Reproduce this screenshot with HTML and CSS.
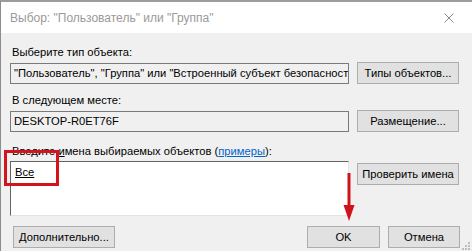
FILE: index.html
```html
<!DOCTYPE html>
<html lang="ru">
<head>
    <meta charset="UTF-8">
    <title>Выбор: "Пользователь" или "Группа"</title>
    <link rel="stylesheet" href="styles.css">
</head>
<body>
    <div class="window">
        <!-- заголовок -->
        <div class="titlebar">
            <span class="title">Выбор: "Пользователь" или "Группа"</span>
            <svg class="close" width="10" height="10" viewBox="0 0 10 10">
                <path d="M0.5 0.5 L9.5 9.5 M9.5 0.5 L0.5 9.5" stroke="#8a8a8a" stroke-width="1" fill="none"/>
            </svg>
        </div>
        <div class="content">
            <div class="label">Выберите тип объекта:</div>
            <div class="row">
                <div class="field">"Пользователь", "Группа" или "Встроенный субъект безопасности"</div>
                <div class="btn side">Типы объектов...</div>
            </div>
            <div class="label l2">В следующем месте:</div>
            <div class="row">
                <div class="field">DESKTOP-R0ET76F</div>
                <div class="btn side">Размещение...</div>
            </div>
            <div class="label l3">Введите <u>и</u>мена выбираемых объектов (<a href="#">примеры</a>):</div>
            <div class="row top">
                <div class="names"><u>Все</u></div>
                <div class="btn side check">Проверить имена</div>
            </div>
            <div class="bottom">
                <div class="btn more">Дополнительно...</div>
                <div class="btn ok">OK</div>
                <div class="btn cancel">Отмена</div>
            </div>
        </div>
        <!-- выделение красным -->
        <div class="mark"></div>
        <svg class="arrow" width="14" height="50" viewBox="0 0 14 50">
            <path d="M7 0 L7 33" stroke="#d0121b" stroke-width="3" fill="none"/>
            <path d="M1.5 32 L12.5 32 L7 48 Z" fill="#d0121b"/>
        </svg>
        <svg class="grip" width="10" height="10" viewBox="0 0 10 10">
            <rect x="7" y="1" width="2" height="2" fill="#bdbdbd"/>
            <rect x="4" y="4" width="2" height="2" fill="#bdbdbd"/>
            <rect x="7" y="4" width="2" height="2" fill="#bdbdbd"/>
            <rect x="1" y="7" width="2" height="2" fill="#bdbdbd"/>
            <rect x="4" y="7" width="2" height="2" fill="#bdbdbd"/>
            <rect x="7" y="7" width="2" height="2" fill="#bdbdbd"/>
        </svg>
    </div>
</body>
</html>
```
FILE: styles.css
```css
*{
    margin: 0;
    padding: 0;
    box-sizing: border-box;
}
body{
    font-family: "Liberation Sans", Arial, sans-serif;
    font-size: 11.2px;
    color: #000;
    background: #f0f0f0;
}
.window{
    width: 472px;
    height: 251px;
    position: relative;
    overflow: hidden;
    background: #f0f0f0;
    border-top: 2px solid #9c9c9c;
    border-left: 1px solid #8c8c8c;
}
.titlebar{
    height: 31px;
    background: #fff;
    display: flex;
    align-items: center;
    justify-content: space-between;
    padding: 0 18px 0 9px;
}
.title{
    color: #9a9a9a;
    font-size: 12px;
}
.content{
    padding: 12px 12px 0 9px;
}
.label{
    height: 14px;
    line-height: 14px;
    padding-left: 2px;
}
.l2{
    margin-top: 9px;
}
.l3{
    margin-top: 12px;
}
.label a{
    color: #0066cc;
}
.row{
    display: flex;
    align-items: center;
    gap: 8px;
    margin-top: 3px;
}
.row.top{
    align-items: flex-start;
}
.field{
    width: 339px;
    height: 21px;
    line-height: 19px;
    padding: 0 3px;
    border: 1px solid #7a7a7a;
    background: #f0f0f0;
    white-space: nowrap;
    overflow: hidden;
}
.btn{
    height: 22px;
    line-height: 20px;
    text-align: center;
    background: #e1e1e1;
    border: 1px solid #adadad;
    white-space: nowrap;
}
.side{
    width: 102px;
}
.check{
    margin-top: 2px;
}
.names{
    width: 339px;
    height: 55px;
    background: #fff;
    border-top: 1px solid #646464;
    border-left: 1px solid #646464;
    border-right: 1px solid #e3e3e3;
    border-bottom: 1px solid #e3e3e3;
    padding: 2px 4px;
    line-height: 16px;
}
.bottom{
    display: flex;
    gap: 8px;
    margin-top: 10px;
    padding-left: 3px;
}
.more{
    width: 102px;
    margin-right: auto;
}
.ok{
    width: 73px;
}
.cancel{
    width: 72px;
}
.close{
    display: block;
}
.mark{
    position: absolute;
    left: 3px;
    top: 148px;
    width: 55px;
    height: 36px;
    border: 3px solid #d3141c;
}
.arrow{
    position: absolute;
    left: 341px;
    top: 171px;
}
.grip{
    position: absolute;
    right: 1px;
    bottom: 0;
}
```
